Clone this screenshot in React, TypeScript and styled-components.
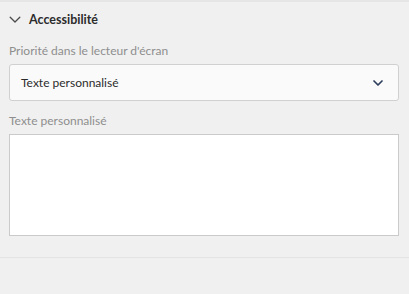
import React from 'react';
import styled, { createGlobalStyle } from 'styled-components';

const GlobalStyle = createGlobalStyle`
    html, body {
        margin: 0;
        padding: 0;
        background: #f0f0f0;
    }
    body {
        font-family: Lato, 'Noto Sans', sans-serif;
    }
`;

const Panel = styled.div`
    width: 409px;
    height: 294px;
    background: #f0f0f0;
    border-top: 2px solid #e6e6e6;
    box-sizing: border-box;
`;

const Section = styled.section`
    padding: 0 10px 21px 9px;
    border-bottom: 1px solid #e3e3e3;
`;

const Header = styled.button`
    display: flex;
    align-items: center;
    gap: 8px;
    height: 35px;
    padding: 0;
    margin: 0 0 6px;
    border: none;
    background: none;
    font-family: Lato, sans-serif;
    font-size: 12.5px;
    font-weight: 700;
    color: #2c2c2c;
    cursor: pointer;
`;

const Label = styled.label`
    display: block;
    font-family: Lato, sans-serif;
    font-size: 12px;
    color: #8e8e8e;
    line-height: 15px;
    margin-bottom: 6px;
`;

const Select = styled.div`
    display: flex;
    align-items: center;
    justify-content: space-between;
    height: 35px;
    padding: 0 15px 0 11px;
    background: #fafafa;
    border: 1px solid #d0d0d0;
    border-radius: 3px;
    font-family: Lato, sans-serif;
    font-size: 12px;
    color: #2c2c2c;
    margin-bottom: 12px;
`;

const TextArea = styled.textarea`
    display: block;
    width: 100%;
    height: 102px;
    box-sizing: border-box;
    background: #ffffff;
    border: 1px solid #cacaca;
    border-radius: 0;
    resize: none;
    margin: 0;
`;

const Chevron = ({ width, stroke, color }: { width: number; stroke: number; color: string }) => (
    <svg width={width} height={width * 0.6} viewBox="0 0 10 6" fill="none">
        <path d="M1 1 L5 5 L9 1" stroke={color} strokeWidth={stroke} strokeLinecap="round" strokeLinejoin="round" />
    </svg>
);

export default function App() {
    return (
        <>
            <GlobalStyle />
            <Panel>
                <Section>
                    <Header>
                        <Chevron width={12} stroke={1.1} color="#4b4b4b" />
                        Accessibilité
                    </Header>
                    <Label>Priorité dans le lecteur d'écran</Label>
                    <Select>
                        <span>Texte personnalisé</span>
                        <Chevron width={10} stroke={1.7} color="#2c3e5c" />
                    </Select>
                    <Label>Texte personnalisé</Label>
                    <TextArea />
                </Section>
            </Panel>
        </>
    );
}
